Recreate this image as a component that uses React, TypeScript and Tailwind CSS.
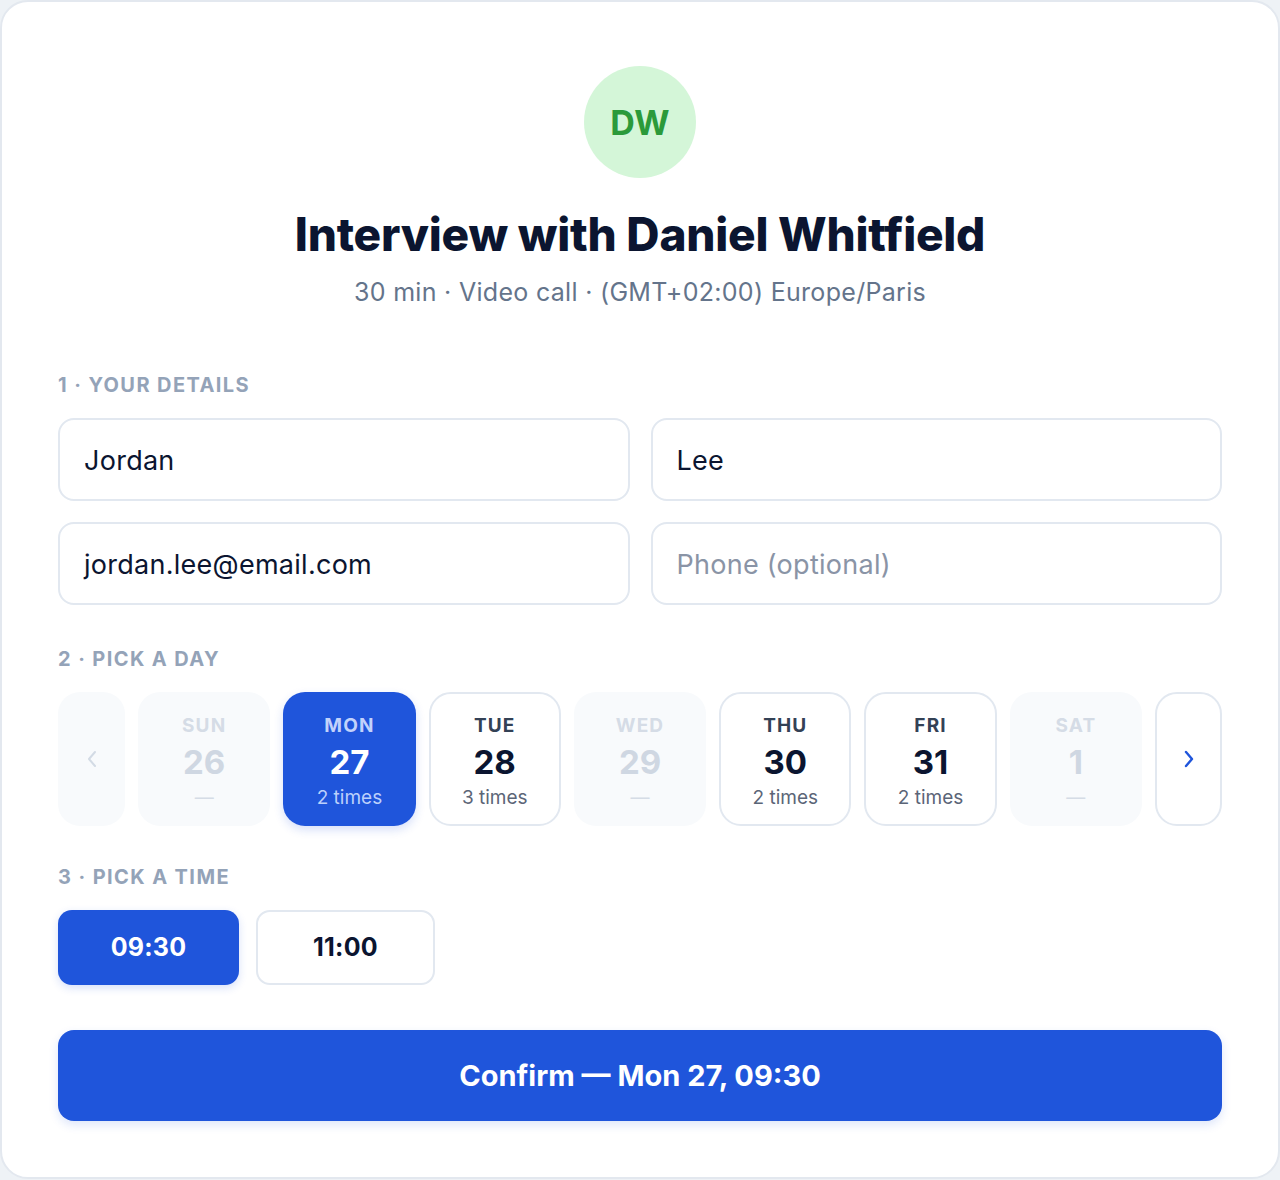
import React from "react";

type Day = { dow: string; num: string; times?: string; state: "off" | "on" | "selected" };

const days: Day[] = [
  { dow: "SUN", num: "26", state: "off" },
  { dow: "MON", num: "27", times: "2 times", state: "selected" },
  { dow: "TUE", num: "28", times: "3 times", state: "on" },
  { dow: "WED", num: "29", state: "off" },
  { dow: "THU", num: "30", times: "2 times", state: "on" },
  { dow: "FRI", num: "31", times: "2 times", state: "on" },
  { dow: "SAT", num: "1", state: "off" },
];

function SectionLabel({ children }: { children: React.ReactNode }) {
  return (
    <div className="text-[20px] leading-[24px] font-bold tracking-[0.07em] text-[#94a3b8]">
      {children}
    </div>
  );
}

function Field({ value, placeholder }: { value?: string; placeholder?: string }) {
  return (
    <div className="h-[83px] rounded-[16px] border-2 border-[#e2e8f0] bg-white flex items-center px-[24px] pt-[3px] text-[27px] tracking-[0.01em]">
      {value ? (
        <span className="text-[#0b1530]">{value}</span>
      ) : (
        <span className="text-[#8a94a6]">{placeholder}</span>
      )}
    </div>
  );
}

function DayCard({ d }: { d: Day }) {
  if (d.state === "selected") {
    return (
      <div className="h-[134px] rounded-[22px] bg-[#1f55db] shadow-[0_4px_10px_rgba(31,85,219,0.18)] flex flex-col items-center pt-[22px]">
        <div className="text-[19px] leading-[24px] font-bold tracking-[0.06em] text-[#c2d2fb]">{d.dow}</div>
        <div className="text-[33px] leading-[40px] font-bold text-white mt-[4px]">{d.num}</div>
        <div className="text-[19px] leading-[24px] text-[#bcd0fb] mt-[4px]">{d.times}</div>
      </div>
    );
  }
  if (d.state === "on") {
    return (
      <div className="h-[134px] rounded-[22px] border-2 border-[#e2e8f0] bg-white flex flex-col items-center pt-[20px]">
        <div className="text-[19px] leading-[24px] font-bold tracking-[0.06em] text-[#334155]">{d.dow}</div>
        <div className="text-[33px] leading-[40px] font-bold text-[#0b1530] mt-[4px]">{d.num}</div>
        <div className="text-[19px] leading-[24px] text-[#5b6577] mt-[4px]">{d.times}</div>
      </div>
    );
  }
  return (
    <div className="h-[134px] rounded-[22px] bg-[#f8fafc] flex flex-col items-center pt-[22px]">
      <div className="text-[19px] leading-[24px] font-bold tracking-[0.06em] text-[#d5dce6]">{d.dow}</div>
      <div className="text-[33px] leading-[40px] font-bold text-[#cfd7e2] mt-[4px]">{d.num}</div>
      <div className="text-[19px] leading-[24px] text-[#d5dce6] mt-[4px]">—</div>
    </div>
  );
}

export default function App() {
  return (
    <div
      className="min-h-[1180px] bg-[#eef2f6]"
      style={{ fontFamily: "Inter, 'Noto Sans', sans-serif" }}
    >
      <div className="w-[1280px] rounded-[28px] border-2 border-[#e3e8ef] bg-white px-[56px] pt-[64px] pb-[56px]">
        {/* Header */}
        <div className="flex flex-col items-center">
          <div className="w-[112px] h-[112px] rounded-full bg-[#d4f6d8] flex items-center justify-center">
            <span className="text-[34px] font-bold text-[#2b9a3a] tracking-[0.01em]">DW</span>
          </div>
          <h1 className="mt-[30px] text-[46px] leading-[53px] font-extrabold tracking-[-0.005em] text-[#0b1530]">
            Interview with Daniel Whitfield
          </h1>
          <p className="mt-[15px] text-[25px] leading-[32px] tracking-[0.012em] text-[#64748b]">
            30 min · Video call · (GMT+02:00) Europe/Paris
          </p>
        </div>

        {/* Step 1 */}
        <div className="mt-[65px]">
          <SectionLabel>1 · YOUR DETAILS</SectionLabel>
          <div className="mt-[21px] grid grid-cols-2 gap-[21px]">
            <Field value="Jordan" />
            <Field value="Lee" />
            <Field value="jordan.lee@email.com" />
            <Field placeholder="Phone (optional)" />
          </div>
        </div>

        {/* Step 2 */}
        <div className="mt-[42px]">
          <SectionLabel>2 · PICK A DAY</SectionLabel>
          <div className="mt-[21px] grid grid-cols-[67px_repeat(7,1fr)_67px] gap-[13px]">
            <div className="h-[134px] rounded-[22px] bg-[#f8fafc] flex items-center justify-center">
              <svg width="14" height="22" viewBox="0 0 14 22" fill="none">
                <path d="M10 4L4 11l6 7" stroke="#d3dbe5" strokeWidth="2" strokeLinecap="round" strokeLinejoin="round" />
              </svg>
            </div>
            {days.map((d) => (
              <DayCard key={d.dow} d={d} />
            ))}
            <div className="h-[134px] rounded-[22px] border-2 border-[#e2e8f0] bg-white flex items-center justify-center">
              <svg width="14" height="22" viewBox="0 0 14 22" fill="none">
                <path d="M4 4l6 7-6 7" stroke="#1f55db" strokeWidth="2.4" strokeLinecap="round" strokeLinejoin="round" />
              </svg>
            </div>
          </div>
        </div>

        {/* Step 3 */}
        <div className="mt-[39px]">
          <SectionLabel>3 · PICK A TIME</SectionLabel>
          <div className="mt-[21px] flex gap-[17px]">
            <div className="w-[181px] h-[75px] rounded-[14px] bg-[#1f55db] shadow-[0_3px_8px_rgba(31,85,219,0.18)] flex items-center justify-center text-[25px] font-bold text-white tracking-[0.01em]">
              09:30
            </div>
            <div className="w-[179px] h-[75px] rounded-[14px] border-2 border-[#e2e8f0] bg-white flex items-center justify-center text-[25px] font-bold text-[#0b1530] tracking-[0.01em]">
              11:00
            </div>
          </div>
        </div>

        {/* Confirm */}
        <div className="mt-[45px] h-[91px] rounded-[16px] bg-[#1f55db] shadow-[0_4px_10px_rgba(31,85,219,0.15)] flex items-center justify-center text-[29px] font-bold text-white">
          Confirm — Mon 27, 09:30
        </div>
      </div>
    </div>
  );
}
